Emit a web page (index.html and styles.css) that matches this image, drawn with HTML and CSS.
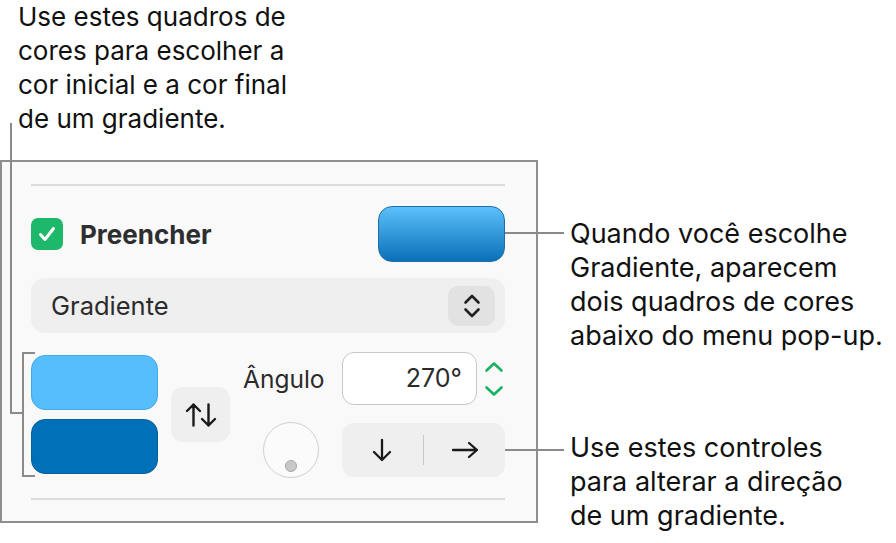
FILE: index.html
```html
<!DOCTYPE html>
<html lang="pt">
<head>
  <meta charset="UTF-8">
  <meta name="viewport" content="width=device-width, initial-scale=1.0">
  <title>Preencher com gradiente</title>
  <link rel="stylesheet" href="styles.css">
</head>
<body>

  <div class="page">
    <p class="note note-top">Use estes quadros de<br>cores para escolher a<br>cor inicial e a cor final<br>de um gradiente.</p>

    <div class="stage">
      <section class="panel">
        <div class="sep"></div>

        <div class="fill-row">
          <label class="fill-check">
            <span class="checkbox">
              <svg width="22" height="22" viewBox="0 0 22 22"><path d="M4.5 11.5l4.5 5 8.5-11" fill="none" stroke="#fff" stroke-width="3" stroke-linecap="round" stroke-linejoin="round"/></svg>
            </span>
            Preencher
          </label>
          <span class="well well-gradient"></span>
        </div>

        <div class="popup">
          <span class="popup-text">Gradiente</span>
          <span class="popup-btn">
            <svg width="18" height="28" viewBox="0 0 18 28"><path d="M2.5 10.5L9 4l6.5 6.5M2.5 17.5L9 24l6.5-6.5" fill="none" stroke="#222" stroke-width="2.6" stroke-linecap="round" stroke-linejoin="round"/></svg>
          </span>
        </div>

        <div class="gradient-grid">
          <div class="wells">
            <span class="well well-start"></span>
            <span class="well well-end"></span>
          </div>

          <button class="swap">
            <svg width="32" height="26" viewBox="0 0 32 26"><path d="M8.5 23.5V2.5M2 9l6.5-6.5L15 9M23.5 2.5v21M17 17l6.5 6.5L30 17" fill="none" stroke="#1a1a1a" stroke-width="2.4" stroke-linecap="round" stroke-linejoin="round"/></svg>
          </button>

          <div class="angle">
            <span class="angle-label">Ângulo</span>
            <div class="angle-field-wrap">
              <span class="angle-field">270°</span>
              <span class="stepper">
                <svg width="20" height="36" viewBox="0 0 20 36"><path d="M2.5 9.5L10 2.5l7.5 7M2.5 26.5L10 33.5l7.5-7" fill="none" stroke="#19b163" stroke-width="2.6" stroke-linecap="round" stroke-linejoin="round"/></svg>
              </span>
            </div>
            <span class="dial"><span class="dial-dot"></span></span>
            <div class="segmented">
              <span class="seg-item">
                <svg width="22" height="24" viewBox="0 0 22 24"><path d="M11 2v20M3 14l8 8 8-8" fill="none" stroke="#1a1a1a" stroke-width="2.3" stroke-linecap="round" stroke-linejoin="round"/></svg>
              </span>
              <span class="seg-divider"></span>
              <span class="seg-item">
                <svg width="28" height="18" viewBox="0 0 28 18"><path d="M2 9h24M18 2l8 7-8 7" fill="none" stroke="#1a1a1a" stroke-width="2.3" stroke-linecap="round" stroke-linejoin="round"/></svg>
              </span>
            </div>
          </div>
        </div>

        <div class="sep sep-bottom"></div>
      </section>

      <div class="callouts">
        <p class="note note-fill">Quando você escolhe<br>Gradiente, aparecem<br>dois quadros de cores<br>abaixo do menu pop-up.</p>
        <p class="note note-dir">Use estes controles<br>para alterar a direção<br>de um gradiente.</p>
      </div>
    </div>

    <!-- leader lines -->
    <span class="leader leader-wells-v"></span>
    <span class="leader leader-wells-h"></span>
    <span class="leader bracket"></span>
    <span class="leader leader-fill"></span>
    <span class="leader leader-dir"></span>
  </div>

</body>
</html>
```

FILE: styles.css
```css
body {
  margin: 0;
  padding: 0;
  background-color: #fff;
  font-family: Inter, "Noto Sans", sans-serif;
  color: #111;
}

.page {
  position: relative;
  width: 896px;
  height: 543px;
  overflow: hidden;
}

.note {
  margin: 0;
  font-size: 26px;
  line-height: 34px;
  color: #111;
  white-space: nowrap;
}

.note-top {
  height: 160px;
  padding-left: 18px;
}

.stage {
  display: flex;
}

/* inspector panel */
.panel {
  box-sizing: border-box;
  flex: none;
  width: 538px;
  height: 363px;
  padding: 22px 31px 21px 29px;
  background-color: #f9f9f9;
  border: 2px solid #8e8e8e;
  display: flex;
  flex-direction: column;
  color: #2b2b2b;
}

.sep {
  height: 2px;
  background-color: #dcdcdc;
}

.sep-bottom {
  margin-top: 21px;
}

.fill-row {
  display: flex;
  align-items: center;
  justify-content: space-between;
  height: 56px;
  margin-top: 20px;
}

.fill-check {
  display: flex;
  align-items: center;
  gap: 17px;
  font-size: 26px;
  font-weight: 700;
  color: #2e2e2e;
}

.checkbox {
  width: 32px;
  height: 32px;
  border-radius: 7px;
  background-color: #1db86a;
  display: flex;
  align-items: center;
  justify-content: center;
}

.well {
  box-sizing: border-box;
  display: block;
  width: 127px;
  height: 55px;
  border-radius: 14px;
}

.well-gradient {
  height: 56px;
  background: linear-gradient(#5cc0fb, #0a70b8);
  border: 1px solid #1f6ea8;
}

.popup {
  margin-top: 16px;
  height: 55px;
  border-radius: 14px;
  background-color: #efefef;
  display: flex;
  align-items: center;
  justify-content: space-between;
  padding: 0 10px 0 20px;
}

.popup-text {
  font-size: 25.5px;
}

.popup-btn {
  width: 47px;
  height: 40px;
  border-radius: 10px;
  background-color: #e2e2e2;
  display: flex;
  align-items: center;
  justify-content: center;
}

.gradient-grid {
  margin-top: 19px;
  height: 125px;
  display: flex;
  align-items: center;
  gap: 13px;
}

.wells {
  display: flex;
  flex-direction: column;
  gap: 9px;
}

.well-start {
  background-color: #56befd;
  border: 1px solid #45a8e6;
}

.well-end {
  background-color: #0071b9;
  border: 1px solid #0a5f9a;
}

.swap {
  width: 59px;
  height: 55px;
  border: 0;
  border-radius: 12px;
  background-color: #efefef;
  display: flex;
  align-items: center;
  justify-content: center;
  padding: 0;
}

.angle {
  display: grid;
  grid-template-columns: 99px 163px;
  grid-template-rows: 53px 54px;
  row-gap: 18px;
  align-items: center;
}

.angle-label {
  font-size: 24.5px;
}

.angle-field-wrap {
  display: flex;
  align-items: center;
  gap: 7px;
  height: 100%;
}

.angle-field {
  box-sizing: border-box;
  width: 135px;
  height: 53px;
  border: 1.5px solid #c6c6c6;
  border-radius: 12px;
  background-color: #fff;
  font-size: 25px;
  text-align: right;
  padding-right: 14px;
  line-height: 50px;
}

.stepper {
  display: flex;
}

.dial {
  position: relative;
  box-sizing: border-box;
  width: 56px;
  height: 56px;
  margin-left: 20px;
  border: 1.5px solid #cfcfcf;
  border-radius: 50%;
  background-color: #fbfbfb;
}

.dial-dot {
  position: absolute;
  left: 20.5px;
  bottom: 5px;
  box-sizing: border-box;
  width: 12px;
  height: 12px;
  border-radius: 50%;
  background-color: #c8c8c8;
  border: 1.5px solid #a6a6a6;
}

.segmented {
  height: 54px;
  border-radius: 12px;
  background-color: #efefef;
  display: flex;
  align-items: center;
}

.seg-item {
  flex: 1;
  display: flex;
  align-items: center;
  justify-content: center;
}

.seg-divider {
  width: 1.5px;
  height: 30px;
  background-color: #c8c8c8;
}

/* callouts */
.callouts {
  padding-left: 32px;
}

.callouts .note {
  font-size: 27px;
}

.note-fill {
  margin-top: 57px;
}

.note-dir {
  margin-top: 78px;
}

/* leader lines */
.leader {
  position: absolute;
  background-color: #8a8a8a;
}

.leader-wells-v {
  left: 10px;
  top: 123px;
  width: 2px;
  height: 291px;
}

.leader-wells-h {
  left: 10px;
  top: 412px;
  width: 13px;
  height: 2px;
}

.bracket {
  left: 22px;
  top: 352px;
  width: 11px;
  height: 121px;
  background: none;
  border: 2px solid #8a8a8a;
  border-right: 0;
}

.leader-fill {
  left: 505px;
  top: 232px;
  width: 59px;
  height: 2px;
}

.leader-dir {
  left: 505px;
  top: 449px;
  width: 59px;
  height: 2px;
}
```
